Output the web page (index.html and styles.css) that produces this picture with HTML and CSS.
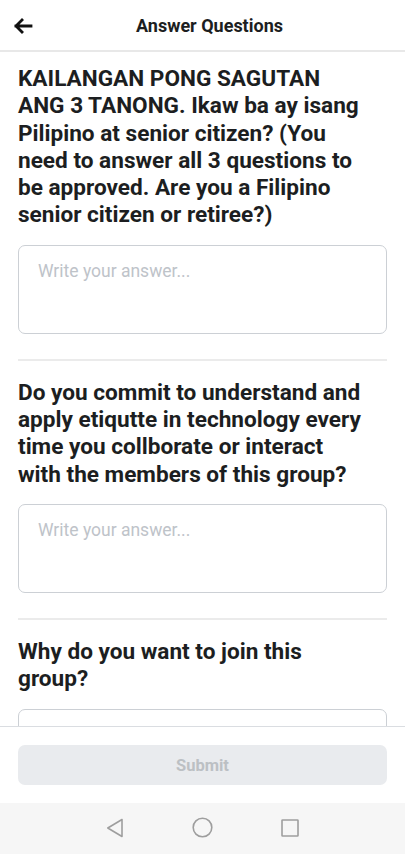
FILE: index.html
```html
<!DOCTYPE html>
<html lang="en">
<head>
<meta charset="utf-8">
<title>Answer Questions</title>
<link rel="stylesheet" href="styles.css">
</head>
<body>
<div class="screen">
  <header class="topbar">
    <button class="back" aria-label="Back">
      <svg width="20" height="16" viewBox="0 0 20 16"><path d="M18 8H3M9 2L3 8l6 6" fill="none" stroke="#111" stroke-width="2.8" stroke-linecap="square"/></svg>
    </button>
    <h1 class="title">Answer Questions</h1>
  </header>
  <main class="content">
    <section class="question">
      <h2 class="qtext">KAILANGAN PONG SAGUTAN ANG 3 TANONG. Ikaw ba ay isang Pilipino at senior citizen? (You need to answer all 3 questions to be approved. Are you a Filipino senior citizen or retiree?)</h2>
      <div class="answer">Write your answer...</div>
    </section>
    <hr class="divider">
    <section class="question">
      <h2 class="qtext">Do you commit to understand and apply etiqutte in technology every time you collborate or interact with the members of this group?</h2>
      <div class="answer">Write your answer...</div>
    </section>
    <hr class="divider">
    <section class="question">
      <h2 class="qtext">Why do you want to join this group?</h2>
      <div class="answer"></div>
    </section>
  </main>
  <footer class="footer">
    <button class="submit">Submit</button>
  </footer>
  <nav class="navbar">
    <svg width="18" height="20" viewBox="0 0 18 20"><path d="M16 1.5V18.5L1.8 10Z" fill="none" stroke="#9e9e9e" stroke-width="1.6" stroke-linejoin="round"/></svg>
    <svg width="21" height="21" viewBox="0 0 21 21"><circle cx="10.5" cy="10.5" r="9.3" fill="none" stroke="#9e9e9e" stroke-width="1.6"/></svg>
    <svg width="18" height="18" viewBox="0 0 18 18"><rect x="1" y="1" width="16" height="16" rx="0.5" fill="none" stroke="#9e9e9e" stroke-width="1.6"/></svg>
  </nav>
</div>
</body>
</html>
```
FILE: styles.css
```css
* { box-sizing: border-box; }
html, body { margin: 0; padding: 0; }
body {
  font-family: Roboto, "Liberation Sans", sans-serif;
  background: #fff;
  color: #1c1e21;
}
.screen {
  width: 405px;
  height: 854px;
  display: flex;
  flex-direction: column;
  overflow: hidden;
}
.topbar {
  height: 52px;
  flex: none;
  display: flex;
  align-items: center;
  justify-content: center;
  position: relative;
  border-bottom: 2px solid #e8e8e8;
}
.back {
  position: absolute;
  left: 13px;
  top: 18px;
  border: 0;
  background: none;
  padding: 0;
  width: 20px;
  height: 16px;
  display: flex;
}
.title {
  margin: 0;
  font-size: 18px;
  font-weight: 700;
  color: #1c1e21;
  padding-left: 14px;
}
.content {
  flex: 1;
  min-height: 0;
  overflow: hidden;
  padding: 13px 18px 0;
}
.question { display: flex; flex-direction: column; }
.qtext {
  margin: 0;
  padding-right: 26px;
  font-size: 22.6px;
  line-height: 27.3px;
  font-weight: 700;
  color: #1c1e21;
}
.answer {
  margin-top: 16px;
  height: 89px;
  border: 1px solid #ccd0d5;
  border-radius: 7px;
  padding: 15px 19px;
  font-size: 17.5px;
  line-height: 20px;
  color: #bec3c9;
}
.divider {
  border: 0;
  border-top: 2px solid #ebebeb;
  margin: 25px 0 18px;
}
.footer {
  flex: none;
  height: 77px;
  border-top: 1px solid #dadde1;
  padding: 18px 18px 0;
  background: #fff;
}
.submit {
  width: 100%;
  height: 40px;
  border: 0;
  border-radius: 7px;
  background: #e9ebee;
  color: #bcc0c4;
  font-family: Roboto, "Liberation Sans", sans-serif;
  font-size: 16.5px;
  font-weight: 700;
}
.navbar {
  flex: none;
  height: 51px;
  background: #f6f6f6;
  display: flex;
  align-items: center;
  justify-content: center;
  gap: 68px;
  padding-bottom: 2px;
}
```
